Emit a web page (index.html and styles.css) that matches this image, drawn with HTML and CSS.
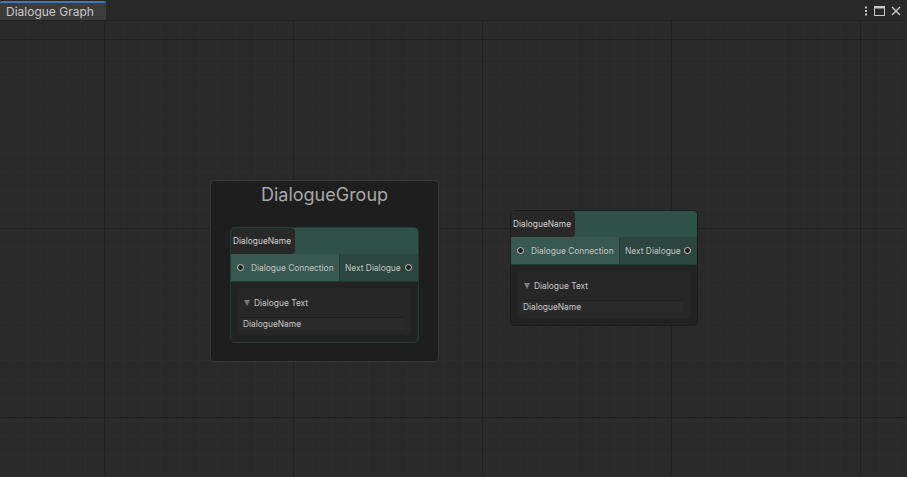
FILE: index.html
```html
<!DOCTYPE html>
<html>
<head>
<meta charset="utf-8">
<link rel="stylesheet" href="styles.css">
</head>
<body>
<div class="window">
  <div class="tabbar">
    <div class="tab">Dialogue Graph</div>
    <div class="tools">
      <svg class="ico" width="4" height="10" viewBox="0 0 4 10"><rect x="1" y="0.5" width="2" height="2" fill="#c8c8c8"/><rect x="1" y="4" width="2" height="2" fill="#c8c8c8"/><rect x="1" y="7.5" width="2" height="2" fill="#c8c8c8"/></svg>
      <svg class="ico" width="11" height="10" viewBox="0 0 11 10"><rect x="0.5" y="0.5" width="10" height="9" fill="none" stroke="#c8c8c8" stroke-width="1"/><rect x="0.5" y="0.5" width="10" height="2" fill="#c8c8c8"/></svg>
      <svg class="ico" width="10" height="10" viewBox="0 0 10 10"><path d="M1 1 L9 9 M9 1 L1 9" stroke="#c8c8c8" stroke-width="1.4"/></svg>
    </div>
  </div>
  <div class="canvas">
    <div class="group">
      <div class="group-title">DialogueGroup</div>
      <div class="node">
        <div class="node-title"><div class="name-field">DialogueName</div></div>
        <div class="ports">
          <div class="port port-in"><span class="dot"></span>Dialogue Connection</div>
          <div class="port port-out">Next Dialogue<span class="dot"></span></div>
        </div>
        <div class="contents">
          <div class="box">
            <div class="foldout"><span class="tri"></span>Dialogue Text</div>
            <div class="textfield">DialogueName</div>
          </div>
        </div>
      </div>
    </div>
    <div class="node node-free">
      <div class="node-title"><div class="name-field">DialogueName</div></div>
      <div class="ports">
        <div class="port port-in"><span class="dot"></span>Dialogue Connection</div>
        <div class="port port-out">Next Dialogue<span class="dot"></span></div>
      </div>
      <div class="contents">
        <div class="box">
          <div class="foldout"><span class="tri"></span>Dialogue Text</div>
          <div class="textfield">DialogueName</div>
        </div>
      </div>
    </div>
  </div>
</div>
</body>
</html>
```
FILE: styles.css
```css
html, body {
  margin: 0;
  padding: 0;
  background: #2a2a2a;
}
body {
  font-family: Inter, "Noto Sans", sans-serif;
  color: #c4c4c4;
}
.window {
  width: 907px;
  height: 477px;
  display: flex;
  flex-direction: column;
  overflow: hidden;
  border-radius: 0 0 5px 5px;
}
.tabbar {
  height: 21px;
  background: #282828;
  border-bottom: 1px solid #232323;
  display: flex;
  align-items: stretch;
  justify-content: space-between;
  box-sizing: border-box;
}
.tab {
  width: 106px;
  margin-top: 1px;
  background: #3c3c3c;
  border-top: 2px solid #3a79bb;
  box-sizing: border-box;
  font-size: 12px;
  line-height: 17px;
  padding-left: 6px;
  color: #c8c8c8;
  border-radius: 2px 2px 0 0;
}
.tools {
  display: flex;
  align-items: center;
  gap: 6px;
  padding-right: 6px;
  padding-top: 1px;
}
.ico { display: block; }
.canvas {
  position: relative;
  flex: 1;
  background-color: #2a2a2a;
  background-image:
    linear-gradient(to right, #212121 1px, transparent 1px),
    linear-gradient(to bottom, #212121 1px, transparent 1px),
    linear-gradient(to right, #2d2d2d 1px, transparent 1px),
    linear-gradient(to bottom, #2d2d2d 1px, transparent 1px);
  background-size: 189px 100%, 100% 189px, 18.9px 100%, 100% 18.9px;
  background-position: 104px 0, 0 18px, 104px 0, 0 18px;
}
.group {
  position: absolute;
  left: 210px;
  top: 159px;
  width: 229px;
  height: 182px;
  box-sizing: border-box;
  background: #1e1e1e;
  border: 1px solid #393939;
  border-radius: 5px;
  padding: 0 19px;
}
.group-title {
  text-align: center;
  font-size: 18px;
  line-height: 24px;
  padding-top: 2px;
  height: 46px;
  box-sizing: border-box;
  color: #a8a8a8;
}
.node {
  width: 189px;
  border-radius: 5px;
  border: 1px solid #1f3d35;
  background: #232323;
  box-sizing: border-box;
  overflow: hidden;
  font-size: 8.4px;
}
.node-free {
  position: absolute;
  left: 510px;
  top: 189px;
  width: 188px;
  border-color: #1b1b1b;
}
.node-title {
  height: 26px;
  background: #2f5248;
  display: flex;
}
.name-field {
  width: 64px;
  background: #282828;
  border-radius: 0 4px 4px 0;
  line-height: 26px;
  padding-left: 2px;
  box-sizing: border-box;
  color: #d2d2d2;
  white-space: nowrap;
}
.ports {
  display: flex;
  height: 27px;
  border-bottom: 1px solid #1f3d35;
}
.port {
  display: flex;
  align-items: center;
  white-space: nowrap;
  color: #c4c4c4;
}
.port-in {
  width: 108px;
  background: #37594f;
  padding-left: 6px;
  gap: 7px;
  box-sizing: border-box;
}
.port-out {
  flex: 1;
  background: #2a463e;
  border-left: 1px solid #243d36;
  padding-left: 5px;
  padding-right: 6px;
  justify-content: space-between;
}
.dot {
  flex-shrink: 0;
  width: 5px;
  height: 5px;
  border-radius: 50%;
  border: 1px solid #c8c8c8;
  background: #1e1e1e;
  display: inline-block;
}
.contents {
  padding: 6px 7px 7px 7px;
}
.box {
  background: #272727;
  border-radius: 3px;
  height: 47px;
  padding: 8px 7px 0 2px;
  box-sizing: border-box;
}
.foldout {
  display: flex;
  align-items: center;
  gap: 4px;
  height: 14px;
  padding-left: 4px;
  color: #c8c8c8;
}
.tri {
  width: 0;
  height: 0;
  border-left: 3.5px solid transparent;
  border-right: 3.5px solid transparent;
  border-top: 6px solid #7a7a7a;
}
.textfield {
  margin-top: 7px;
  height: 12px;
  line-height: 12px;
  background: #2a2a2a;
  border-top: 1px solid #1f1f1f;
  padding-left: 3px;
  color: #c8c8c8;
}
```
